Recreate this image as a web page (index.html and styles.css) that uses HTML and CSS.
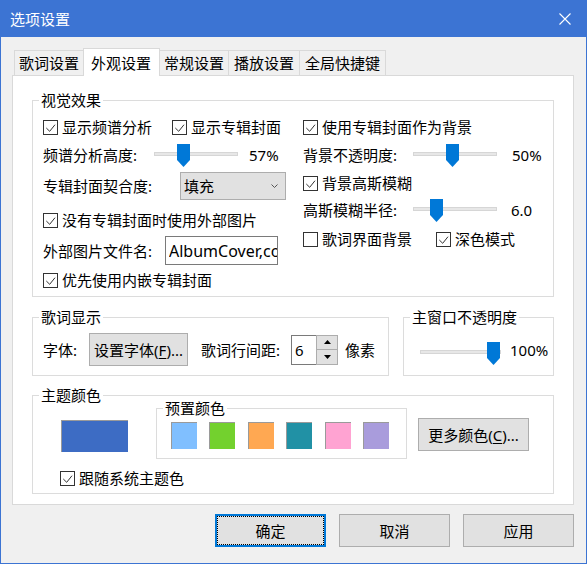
FILE: index.html
```html
<!DOCTYPE html>
<html lang="zh-CN">
<head>
<meta charset="utf-8">
<title>选项设置</title>
<link rel="stylesheet" href="styles.css">
</head>
<body>
<div class="window">
  <div class="titlebar">
    <span class="title">选项设置</span>
    <svg class="close" width="12" height="12" viewBox="0 0 12 12"><path d="M0.5 0.5 L11.5 11.5 M11.5 0.5 L0.5 11.5" stroke="#fff" stroke-width="1.1" fill="none"/></svg>
  </div>
  <div class="tabs">
    <div class="tab">歌词设置</div>
    <div class="tab tab-active">外观设置</div>
    <div class="tab">常规设置</div>
    <div class="tab tab-mid">播放设置</div>
    <div class="tab tab-wide">全局快捷键</div>
  </div>
  <div class="panel">
    <div class="group">
      <div class="group-title">视觉效果</div>
      <div class="visual-body">
        <div class="col col-left">
          <div class="row h20 gap20">
            <div class="check"><span class="box"><svg width="13" height="13" viewBox="0 0 13 13"><polyline points="2.3,7 5.7,10.3 11,3.7" fill="none" stroke="#333" stroke-width="1"/></svg></span><span>显示频谱分析</span></div>
            <div class="check"><span class="box"><svg width="13" height="13" viewBox="0 0 13 13"><polyline points="2.3,7 5.7,10.3 11,3.7" fill="none" stroke="#333" stroke-width="1"/></svg></span><span>显示专辑封面</span></div>
          </div>
          <div class="row h35">
            <span class="lbl w111">频谱分析高度:</span>
            <div class="slider w84 mt7"><div class="track"></div><svg class="thumb" style="left:23px" width="13" height="23" viewBox="0 0 13 23"><polygon points="0,0 13,0 13,16 6.5,23 0,16" fill="#0078d7"/></svg></div>
            <span class="val ml11">57%</span>
          </div>
          <div class="row h28">
            <span class="lbl w137">专辑封面契合度:</span>
            <div class="combo"><span>填充</span><svg width="7" height="4" viewBox="0 0 7 4"><polyline points="0.5,0.5 3.5,3.5 6.5,0.5" fill="none" stroke="#555" stroke-width="1"/></svg></div>
          </div>
          <div class="row h36 pt4">
            <div class="check"><span class="box"><svg width="13" height="13" viewBox="0 0 13 13"><polyline points="2.3,7 5.7,10.3 11,3.7" fill="none" stroke="#333" stroke-width="1"/></svg></span><span>没有专辑封面时使用外部图片</span></div>
          </div>
          <div class="row h29">
            <span class="lbl w122">外部图片文件名:</span>
            <input class="textbox" type="text" value="AlbumCover,cover" readonly>
          </div>
          <div class="row h30">
            <div class="check"><span class="box"><svg width="13" height="13" viewBox="0 0 13 13"><polyline points="2.3,7 5.7,10.3 11,3.7" fill="none" stroke="#333" stroke-width="1"/></svg></span><span>优先使用内嵌专辑封面</span></div>
          </div>
        </div>
        <div class="col col-right">
          <div class="row h20">
            <div class="check"><span class="box"><svg width="13" height="13" viewBox="0 0 13 13"><polyline points="2.3,7 5.7,10.3 11,3.7" fill="none" stroke="#333" stroke-width="1"/></svg></span><span>使用专辑封面作为背景</span></div>
          </div>
          <div class="row h36">
            <span class="lbl w110">背景不透明度:</span>
            <div class="slider w84 mt7"><div class="track"></div><svg class="thumb" style="left:33px" width="13" height="23" viewBox="0 0 13 23"><polygon points="0,0 13,0 13,16 6.5,23 0,16" fill="#0078d7"/></svg></div>
            <span class="val ml15">50%</span>
          </div>
          <div class="row h20">
            <div class="check"><span class="box"><svg width="13" height="13" viewBox="0 0 13 13"><polyline points="2.3,7 5.7,10.3 11,3.7" fill="none" stroke="#333" stroke-width="1"/></svg></span><span>背景高斯模糊</span></div>
          </div>
          <div class="row h34">
            <span class="lbl w110">高斯模糊半径:</span>
            <div class="slider w84 mt6"><div class="track"></div><svg class="thumb" style="left:17px" width="13" height="23" viewBox="0 0 13 23"><polygon points="0,0 13,0 13,16 6.5,23 0,16" fill="#0078d7"/></svg></div>
            <span class="val ml14">6.0</span>
          </div>
          <div class="row h24 gap24">
            <div class="check"><span class="box"></span><span>歌词界面背景</span></div>
            <div class="check"><span class="box"><svg width="13" height="13" viewBox="0 0 13 13"><polyline points="2.3,7 5.7,10.3 11,3.7" fill="none" stroke="#333" stroke-width="1"/></svg></span><span>深色模式</span></div>
          </div>
        </div>
      </div>
    </div>

    <div class="group-row">
      <div class="group g-lyric">
        <div class="group-title">歌词显示</div>
        <div class="lyric-body">
          <span class="lbl w46">字体:</span>
          <div class="btn btn-font">设置字体(<u>F</u>)...</div>
          <span class="lbl ml13 w90">歌词行间距:</span>
          <div class="spin">
            <div class="spin-input">6</div>
            <div class="spin-btns">
              <div class="spin-btn"><svg width="7" height="4" viewBox="0 0 7 4"><polygon points="0,4 3.5,0 7,4" fill="#000"/></svg></div>
              <div class="spin-btn"><svg width="7" height="4" viewBox="0 0 7 4"><polygon points="0,0 7,0 3.5,4" fill="#000"/></svg></div>
            </div>
          </div>
          <span class="ml7">像素</span>
        </div>
      </div>
      <div class="group g-opacity">
        <div class="group-title">主窗口不透明度</div>
        <div class="opacity-body">
          <div class="slider w81 mt9"><div class="track"></div><svg class="thumb" style="left:67px" width="13" height="23" viewBox="0 0 13 23"><polygon points="0,0 13,0 13,16 6.5,23 0,16" fill="#0078d7"/></svg></div>
          <span class="val ml9">100%</span>
        </div>
      </div>
    </div>

    <div class="group g-theme">
      <div class="group-title">主题颜色</div>
      <div class="theme-row">
        <div class="theme-swatch"></div>
        <div class="group preset">
          <div class="group-title">预置颜色</div>
          <div class="preset-body">
            <div class="sw sw1"></div>
            <div class="sw sw2"></div>
            <div class="sw sw3"></div>
            <div class="sw sw4"></div>
            <div class="sw sw5"></div>
            <div class="sw sw6"></div>
          </div>
        </div>
        <div class="btn btn-more">更多颜色(<u>C</u>)...</div>
      </div>
      <div class="row h20 theme-check">
        <div class="check"><span class="box"><svg width="13" height="13" viewBox="0 0 13 13"><polyline points="2.3,7 5.7,10.3 11,3.7" fill="none" stroke="#333" stroke-width="1"/></svg></span><span>跟随系统主题色</span></div>
      </div>
    </div>
  </div>
  <div class="actions">
    <div class="btn btn-action btn-default">确定</div>
    <div class="btn btn-action">取消</div>
    <div class="btn btn-action">应用</div>
  </div>
</div>
</body>
</html>
```

FILE: styles.css
```css
* { box-sizing: border-box; }
html, body { margin: 0; padding: 0; background: #f0f0f0; }
body {
  font-family: "Noto Sans", "Noto Sans CJK SC", sans-serif;
  font-size: 15px;
  line-height: 16px;
  color: #000;
}
.window {
  width: 587px;
  height: 564px;
  border: 1px solid #3c74d3;
  background: #f0f0f0;
  overflow: hidden;
}
.titlebar {
  height: 36px;
  background: #3c74d3;
  color: #fff;
  display: flex;
  align-items: center;
  justify-content: space-between;
  padding: 0 15px 0 9px;
}
.close { display: block; }

/* tabs */
.tabs {
  display: flex;
  align-items: flex-end;
  height: 27px;
  margin: 11px 0 0 13px;
}
.tab {
  height: 25px;
  padding: 0 4px;
  border: 1px solid #d9d9d9;
  border-bottom: none;
  background: #f0f0f0;
  display: flex;
  align-items: center;
  white-space: nowrap;
}
.tab + .tab { margin-left: -1px; }
.tab-active {
  height: 28px;
  margin-bottom: -1px;
  padding: 0 8px 0 7px;
  background: #fff;
  position: relative;
  z-index: 1;
}
.tab-mid { padding: 0 5px; }
.tab-wide { padding: 0 5px; }

.panel {
  margin: 0 12px 0 11px;
  height: 430px;
  background: #fff;
  border: 1px solid #d9d9d9;
  padding: 24px 19px 0 19px;
}

/* group boxes */
.group {
  border: 1px solid #dcdcdc;
  background: #fff;
}
.group-title {
  width: fit-content;
  height: 16px;
  margin: -9px 0 0 6px;
  padding: 0 2px;
  background: #fff;
  line-height: 16px;
  white-space: nowrap;
}

.visual-body {
  display: flex;
  margin-top: 9px;
  padding: 0 0 1px 10px;
}
.col { display: flex; flex-direction: column; }
.col-left { width: 260px; }
.col-right { flex: 1; }

.row { display: flex; align-items: center; }
.h20 { height: 20px; }
.h24 { height: 24px; }
.h28 { height: 28px; }
.h29 { height: 29px; }
.h30 { height: 30px; }
.h34 { height: 34px; }
.h35 { height: 35px; }
.h36 { height: 36px; }
.pt4 { padding-top: 4px; }
.gap20 { gap: 20px; }
.gap24 { gap: 24px; }

.lbl { white-space: nowrap; flex: none; }
.w46 { width: 46px; }
.w90 { width: 90px; }
.w110 { width: 110px; }
.w111 { width: 111px; }
.w122 { width: 122px; }
.w137 { width: 137px; }
.ml7 { margin-left: 7px; }
.ml9 { margin-left: 9px; }
.ml11 { margin-left: 11px; }
.ml13 { margin-left: 13px; }
.ml14 { margin-left: 14px; }
.ml15 { margin-left: 15px; }

/* checkbox */
.check {
  display: flex;
  align-items: center;
  gap: 4px;
  white-space: nowrap;
}
.box {
  width: 15px;
  height: 15px;
  border: 1px solid #333;
  background: #fff;
  flex: none;
}
.box svg { display: block; }

/* slider */
.slider {
  position: relative;
  height: 23px;
  align-self: flex-start;
  flex: none;
}
.w84 { width: 84px; }
.w81 { width: 81px; }
.mt6 { margin-top: 6px; }
.mt7 { margin-top: 7px; }
.mt9 { margin-top: 9px; }
.track {
  height: 4px;
  margin-top: 8px;
  background: #e7e7e7;
  border: 1px solid #d6d6d6;
}
.thumb {
  position: absolute;
  top: 0;
  display: block;
}
.val { white-space: nowrap; }

/* combo / textbox */
.combo {
  width: 106px;
  height: 28px;
  border: 1px solid #adadad;
  background: #e1e1e1;
  display: flex;
  align-items: center;
  justify-content: space-between;
  padding: 0 7px 0 3px;
}
.combo svg { display: block; }
.textbox {
  width: 113px;
  height: 29px;
  margin: 0;
  border: 1px solid #7a7a7a;
  border-radius: 0;
  background: #fff;
  padding: 0 0 0 3px;
  font-family: "Noto Sans", "Noto Sans CJK SC", sans-serif;
  font-size: 16px;
  color: #000;
  outline: none;
}

/* buttons */
.btn {
  height: 33px;
  border: 1px solid #adadad;
  background: #e1e1e1;
  display: flex;
  align-items: center;
  justify-content: center;
  white-space: nowrap;
  flex: none;
}
.btn u { text-underline-offset: 2px; }
.btn-font { width: 99px; }
.btn-more { width: 111px; margin: 15px 0 0 11px; }

.group-row {
  display: flex;
  gap: 14px;
  margin-top: 20px;
}
.g-lyric { width: 357px; }
.g-opacity { flex: 1; }
.lyric-body {
  display: flex;
  align-items: center;
  height: 33px;
  margin: 8px 0 9px 0;
  padding-left: 10px;
}
.spin {
  display: flex;
  height: 30px;
  flex: none;
}
.spin-input {
  width: 25px;
  height: 30px;
  border: 1px solid #7a7a7a;
  border-right: none;
  background: #fff;
  padding-left: 3px;
  line-height: 28px;
}
.spin-btns {
  width: 22px;
  display: flex;
  flex-direction: column;
}
.spin-btn {
  height: 15px;
  border: 1px solid #adadad;
  background: #e1e1e1;
  display: flex;
  align-items: center;
  justify-content: center;
}
.spin-btn + .spin-btn { border-top: none; }
.spin-btn svg { display: block; }
.opacity-body {
  display: flex;
  align-items: center;
  height: 33px;
  margin: 8px 0 9px 0;
  padding-left: 16px;
}

/* theme colors */
.g-theme { margin-top: 19px; padding-bottom: 5px; }
.theme-row { display: flex; align-items: flex-start; }
.theme-swatch {
  width: 67px;
  height: 32px;
  margin: 17px 0 0 28px;
  background: #3d6cc4;
  border-top: 1px solid #9a9a9a;
  border-left: 1px solid #9a9a9a;
  flex: none;
}
.preset {
  width: 251px;
  margin: 5px 0 0 28px;
  flex: none;
}
.preset-body {
  display: flex;
  gap: 12.4px;
  margin-top: 6px;
  padding: 0 0 9px 14px;
}
.sw {
  width: 26px;
  height: 27px;
  border-top: 1px solid #9a9a9a;
  border-left: 1px solid #9a9a9a;
  flex: none;
}
.sw1 { background: #80bfff; }
.sw2 { background: #73d12e; }
.sw3 { background: #ffa852; }
.sw4 { background: #2191a5; }
.sw5 { background: #ffa3d2; }
.sw6 { background: #a99cdc; }
.theme-check { margin: 9px 0 0 27px; }

/* dialog buttons */
.actions {
  display: flex;
  justify-content: flex-end;
  gap: 13px;
  margin: 9px 12px 0 0;
}
.btn-action { width: 111px; }
.btn-default {
  border: 2px solid #0078d7;
  outline: 1px dotted #000;
  outline-offset: -3px;
}
```
